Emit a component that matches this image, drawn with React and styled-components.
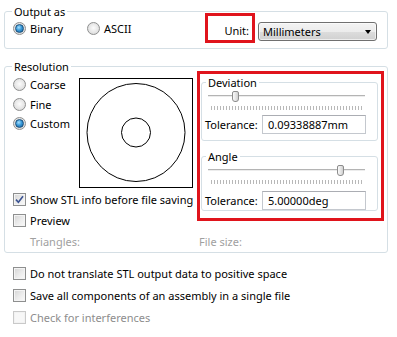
import React from 'react';
import styled, { createGlobalStyle } from 'styled-components';

const FONT = '"Noto Sans", "Open Sans", "DejaVu Sans", sans-serif';

const Global = createGlobalStyle`
  html, body { margin: 0; padding: 0; background: #fff; }
  body { font-family: ${FONT}; font-size: 11px; color: #000; }
  * { box-sizing: border-box; }
`;

const Page = styled.div`
  width: 397px;
  height: 337px;
  padding-left: 4px;
  display: flex;
  flex-direction: column;
  overflow: hidden;
`;

const Group = styled.div`
  position: relative;
  border: 1px solid #d5dfe5;
  border-radius: 3px;
  width: ${(p) => p.$w}px;
  height: ${(p) => (p.$h ? `${p.$h}px` : 'auto')};
  margin-top: ${(p) => p.$mt || 0}px;
  padding: ${(p) => p.$pad};
`;

const GroupTitle = styled.span`
  position: absolute;
  left: ${(p) => p.$left}px;
  top: -8px;
  padding: 0 2px;
  line-height: 15px;
  background: #fff;
  white-space: nowrap;
`;

const Row = styled.div`
  display: flex;
  align-items: center;
  height: ${(p) => p.$h}px;
  margin-top: ${(p) => p.$mt || 0}px;
  padding-left: ${(p) => p.$pl || 0}px;
`;

const Option = styled.label`
  display: flex;
  align-items: center;
  gap: 4px;
  width: ${(p) => (p.$w ? `${p.$w}px` : 'auto')};
  height: ${(p) => p.$h || 20}px;
  flex-shrink: 0;
  white-space: nowrap;
  color: ${(p) => (p.$disabled ? '#8d8d8d' : '#000')};
`;

const RadioDot = styled.span`
  width: 13px;
  height: 13px;
  border-radius: 50%;
  border: 1px solid #8e8f8f;
  background: radial-gradient(circle at 50% 45%, #fcfcfc 0%, #e6e6e6 55%, #cfcfcf 100%);
  display: flex;
  align-items: center;
  justify-content: center;
  flex-shrink: 0;
  &::after {
    content: '';
    display: ${(p) => (p.$checked ? 'block' : 'none')};
    width: 7px;
    height: 7px;
    border-radius: 50%;
    border: 1px solid #1b4f7a;
    background: radial-gradient(circle at 40% 35%, #a7e0ff 0%, #3a9ad9 45%, #0f5c98 100%);
  }
`;

const CheckBox = styled.span`
  width: 13px;
  height: 13px;
  border: 1px solid ${(p) => (p.$disabled ? '#c9c9c9' : '#8e8f8f')};
  background: ${(p) =>
    p.$disabled
      ? '#f7f7f7'
      : 'linear-gradient(135deg, #d4d4d4 0%, #ececec 55%, #fafafa 100%)'};
  box-shadow: inset 0 0 0 1px ${(p) => (p.$disabled ? '#f2f2f2' : '#f4f4f4')};
  display: flex;
  align-items: center;
  justify-content: center;
  flex-shrink: 0;
`;

const Gray = styled.span`
  color: #a0a0a0;
`;

const UnitFrame = styled.div`
  margin-left: auto;
  width: 50px;
  height: 30px;
  border: 3px solid #e0141c;
  display: flex;
  align-items: center;
  justify-content: flex-end;
  padding: 4px 3px 0 0;
`;

const Select = styled.div`
  position: relative;
  align-self: flex-start;
  margin-top: 9px;
  margin-left: 3px;
  width: 119px;
  height: 19px;
  border: 1px solid #707070;
  border-radius: 3px;
  background: linear-gradient(#f3f3f3 0%, #ececec 50%, #dddddd 51%, #d0d0d0 100%);
  box-shadow: inset 0 0 0 1px rgba(255, 255, 255, 0.6);
  padding-left: 4px;
  line-height: 17px;
  &::after {
    content: '';
    position: absolute;
    right: 5px;
    top: 7px;
    border-left: 3.5px solid transparent;
    border-right: 3.5px solid transparent;
    border-top: 4px solid #000;
  }
`;

const Body = styled.div`
  display: flex;
  gap: 4px;
`;

const Column = styled.div`
  display: flex;
  flex-direction: column;
  width: ${(p) => p.$w}px;
`;

const RadioStack = styled.div`
  display: flex;
  flex-direction: column;
  width: 66px;
  padding-top: 4px;
`;

const PreviewBox = styled.div`
  margin-top: 7px;
  width: 114px;
  height: 110px;
  border: 1px solid #000;
  display: flex;
`;

const Highlight = styled.div`
  border: 3px solid #e0141c;
  height: 150px;
  padding: 8px 3px 0 1px;
  display: flex;
  flex-direction: column;
  gap: 15px;
`;

const SliderArea = styled.div`
  position: relative;
  margin: 4px 0 0 6px;
  width: 157px;
  height: 21px;
`;

const Track = styled.div`
  position: absolute;
  left: 0;
  right: 0;
  top: 5px;
  height: 2px;
  border-top: 1px solid #b4b4b4;
  border-bottom: 1px solid #ececec;
`;

const Ticks = styled.div`
  position: absolute;
  left: 3px;
  right: 1px;
  top: 16px;
  height: 4px;
  background: repeating-linear-gradient(to right, #b8b8b8 0 1px, transparent 1px 3px);
`;

const Thumb = styled.div`
  position: absolute;
  top: 1px;
  width: 7px;
  height: 11px;
  border: 1px solid #8c8c8c;
  border-radius: 2px 2px 3px 3px;
  background: linear-gradient(to right, #fafafa, #e2e2e2 60%, #cfcfcf);
`;

const TolRow = styled.div`
  display: flex;
  align-items: center;
  height: 19px;
  margin-top: ${(p) => p.$mt}px;
  padding-left: 3px;
`;

const TolLabel = styled.span`
  width: 57px;
  flex-shrink: 0;
  white-space: nowrap;
`;

const TextBox = styled.div`
  width: 104px;
  height: 19px;
  border: 1px solid #c4c8ce;
  border-top-color: #abadb3;
  padding-left: 5px;
  line-height: 17px;
  white-space: nowrap;
  background: #fff;
`;

const BottomList = styled.div`
  display: flex;
  flex-direction: column;
  margin-top: 9px;
  padding-left: 9px;
`;

function Radio({ label, checked, w }) {
  return (
    <Option $w={w} $h={w ? 20 : 19.5}>
      <RadioDot $checked={checked} />
      <span>{label}</span>
    </Option>
  );
}

function Check({ label, checked, disabled, h }) {
  return (
    <Option $h={h} $disabled={disabled}>
      <CheckBox $disabled={disabled}>
        {checked && (
          <svg width="9" height="9" viewBox="0 0 9 9">
            <path d="M1 4.6 L3.4 7.2 L8 1.2" fill="none" stroke="#3b5392" strokeWidth="1.6" />
          </svg>
        )}
      </CheckBox>
      <span>{label}</span>
    </Option>
  );
}

function Slider({ pos }) {
  return (
    <SliderArea>
      <Track />
      <Ticks />
      <Thumb style={{ left: `${pos}px` }} />
    </SliderArea>
  );
}

function ToleranceGroup({ title, pos, value, h, rowMt, padB }) {
  return (
    <Group $w={177} $h={h} $pad={`3px 0 ${padB}px 0`}>
      <GroupTitle $left={4}>{title}</GroupTitle>
      <Slider pos={pos} />
      <TolRow $mt={rowMt}>
        <TolLabel>Tolerance:</TolLabel>
        <TextBox>{value}</TextBox>
      </TolRow>
    </Group>
  );
}

export default function App() {
  return (
    <>
      <Global />
      <Page>
        <Group $w={384} $mt={11} $pad="1px 10px 5px 8px">
          <GroupTitle $left={7}>Output as</GroupTitle>
          <Row $h={30}>
            <Radio label="Binary" checked w={74} />
            <Radio label="ASCII" w={60} />
            <UnitFrame>Unit:</UnitFrame>
            <Select>Millimeters</Select>
          </Row>
        </Group>

        <Group $w={384} $mt={17} $pad="4px 3px 1px 8px">
          <GroupTitle $left={7}>Resolution</GroupTitle>
          <Body>
            <Column $w={180}>
              <Row $h={117} style={{ alignItems: 'flex-start' }}>
                <RadioStack>
                  <Radio label="Coarse" />
                  <Radio label="Fine" />
                  <Radio label="Custom" checked />
                </RadioStack>
                <PreviewBox>
                  <svg width="112" height="108" viewBox="0 0 112 108">
                    <circle cx="56" cy="53.5" r="49" fill="none" stroke="#000" strokeWidth="1" />
                    <circle cx="56" cy="53.5" r="14.5" fill="none" stroke="#000" strokeWidth="1" />
                  </svg>
                </PreviewBox>
              </Row>
              <Check label="Show STL info before file saving" checked h={22} />
              <Check label="Preview" h={21} />
              <Row $h={20} $pl={17}>
                <Gray>Triangles:</Gray>
              </Row>
            </Column>
            <Column $w={187}>
              <Highlight>
                <ToleranceGroup title="Deviation" pos={24} value="0.09338887mm" h={59} rowMt={4} padB={9} />
                <ToleranceGroup title="Angle" pos={129} value="5.00000deg" h={55} rowMt={6} padB={3} />
              </Highlight>
              <Row $h={20} $mt={10} $pl={2}>
                <Gray>File size:</Gray>
              </Row>
            </Column>
          </Body>
        </Group>

        <BottomList>
          <Check label="Do not translate STL output data to positive space" h={22} />
          <Check label="Save all components of an assembly in a single file" h={22} />
          <Check label="Check for interferences" disabled h={22} />
        </BottomList>
      </Page>
    </>
  );
}
